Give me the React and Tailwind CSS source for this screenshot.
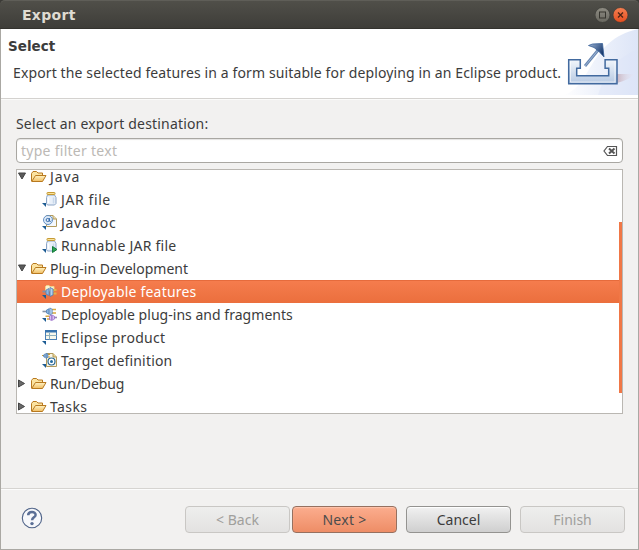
import React from "react";

const UI = "font-['Noto_Sans','Open_Sans',sans-serif]";

function Folder() {
  return (
    <svg width="16" height="16" viewBox="0 0 16 16" className="shrink-0">
      <defs>
        <linearGradient id="fold" x1="0" y1="0" x2="0" y2="1">
          <stop offset="0" stopColor="#fff3c4" />
          <stop offset="1" stopColor="#f0bd62" />
        </linearGradient>
      </defs>
      <path d="M0.5 12V4.500L2 2.500h3.500l1.500 1.500h4.500V6.500" fill="#fbe3a0" stroke="#b8791f" />
      <path d="M0.700 12.500L4.500 6.500h10.500L11.500 12.500z" fill="url(#fold)" stroke="#b8791f" strokeLinejoin="round" />
    </svg>
  );
}

function Corner() {
  return <path d="M0 11h4v4z" fill="#1d5c93" />;
}

function Jar({ run }) {
  return (
    <svg width="16" height="16" viewBox="0 0 16 16" className="shrink-0">
      <path d="M5.500 3h7l1.500 2.500v6l-1.500 1.500h-7l-1-1.500v-6z" fill="#e9f0f9" stroke="#8ba5c6" />
      <path d="M6.500 5.500v5.500" stroke="#fff" strokeWidth="1.500" />
      <path d="M11.500 5.500v6" stroke="#c9d9eb" strokeWidth="1.500" />
      <rect x="5" y="0.500" width="8" height="2" rx="0.500" fill="#fbe39a" stroke="#c59a35" />
      <Corner />
      {run && <path d="M10.500 8.500l4.500 3-4.500 3z" fill="#2ba153" stroke="#147c3a" />}
    </svg>
  );
}

function Javadoc() {
  return (
    <svg width="16" height="16" viewBox="0 0 16 16" className="shrink-0">
      <path d="M4.500 0.500h6.500l3.500 3.500v7.500h-10z" fill="#f4f8fd" stroke="#b29a5d" />
      <path d="M11 0.500v3.500h3.500" fill="#eadcae" stroke="#b29a5d" />
      <circle cx="6" cy="5" r="4.500" fill="#dfebf8" stroke="#5586be" strokeWidth="0.900" />
      <circle cx="5.700" cy="5" r="1.600" fill="none" stroke="#2b62a5" strokeWidth="0.900" />
      <path d="M7.400 3v3.200q1 .9 1.900-.6" fill="none" stroke="#2b62a5" strokeWidth="0.900" />
      <Corner />
    </svg>
  );
}

function Feature() {
  return (
    <svg width="16" height="16" viewBox="0 0 16 16" className="shrink-0">
      <path d="M3.500 7V2.500L4.500 1.500h2.500l1 1h4V7z" fill="#fff4cf" stroke="#f2d48d" />
      <path d="M0.500 7.500h4" stroke="#7f90a8" strokeWidth="1.800" />
      <path d="M11 6h3.500M11 9.500h3.500" stroke="#e3b44a" strokeWidth="1.800" />
      <path d="M4 6l3-1.500v7L4 10z" fill="#8fb6e1" stroke="#5580b4" strokeWidth="0.800" />
      <path d="M8 3.500l3 1.500v6l-3 1.500z" fill="#b4d0ee" stroke="#4a78af" strokeWidth="0.800" />
      <Corner />
    </svg>
  );
}

function Plugins() {
  return (
    <svg width="16" height="16" viewBox="0 0 16 16" className="shrink-0">
      <path d="M0.500 4.500h4" stroke="#8794a8" strokeWidth="1.600" />
      <path d="M10 2.500h4M10 6h4" stroke="#d9a93e" strokeWidth="1.500" />
      <path d="M4.500 3l2.500-1.200v5.400l-2.500-1.200z" fill="#8db3de" stroke="#4378b0" strokeWidth="0.700" />
      <path d="M7.800 1l2.400 1.200v4.600l-2.400 1.200z" fill="#bdd6f0" stroke="#4378b0" strokeWidth="0.700" />
      <path d="M3.500 9.300h4M5 12h3" stroke="#d9a93e" strokeWidth="1.400" />
      <path d="M12 10.500h3" stroke="#9b87b6" strokeWidth="1.600" />
      <path d="M7.500 9l2-1v5.500l-2-1zM10.200 8l2.300 1.300v2.800l-2.300 1.200z" fill="#dac3f4" stroke="#9364c6" strokeWidth="0.700" />
      <Corner />
    </svg>
  );
}

function Product() {
  return (
    <svg width="16" height="16" viewBox="0 0 16 16" className="shrink-0">
      <rect x="3.500" y="0.500" width="11" height="9" fill="#f8f8ec" stroke="#4a7fb5" />
      <rect x="3" y="0" width="12" height="2.500" fill="#3974ae" />
      <path d="M7.500 3v6.500M4 5.500h10.500" stroke="#8eb0bd" />
      <Corner />
    </svg>
  );
}

function Target() {
  return (
    <svg width="16" height="16" viewBox="0 0 16 16" className="shrink-0">
      <path d="M4.500 0.500h6.500l3.500 3.500v9.500h-10z" fill="#fbf6e4" stroke="#b29a5d" />
      <path d="M11 0.500v3.500h3.500" fill="#ecd592" stroke="#b29a5d" />
      <path d="M0 2.500h2M5.500 1.500h2.500M5.500 4h2.500" stroke="#d3a034" strokeWidth="1.200" />
      <path d="M1.500 2l1.800-1.200v4L1.500 3.600zM4 0l2 1.200v3L4 5.400z" fill="#82a9d5" stroke="#4378b0" strokeWidth="0.600" />
      <circle cx="9.500" cy="8.500" r="3.500" fill="#fff" stroke="#286693" strokeWidth="1.200" />
      <circle cx="9.500" cy="8.500" r="1.500" fill="#246ba0" />
      <Corner />
    </svg>
  );
}

const rows = [
  { t: "Java", open: true, c: "tracking-[0.9px]" },
  { t: "JAR file", icon: <Jar />, c: "tracking-[0.6px]" },
  { t: "Javadoc", icon: <Javadoc />, c: "tracking-[0.7px]" },
  { t: "Runnable JAR file", icon: <Jar run />, c: "tracking-[0.24px]" },
  { t: "Plug-in Development", open: true, c: "tracking-[0px]" },
  { t: "Deployable features", icon: <Feature />, selected: true, c: "tracking-[0.2px]" },
  { t: "Deployable plug-ins and fragments", icon: <Plugins />, c: "tracking-[0.03px]" },
  { t: "Eclipse product", icon: <Product />, c: "tracking-[0.27px]" },
  { t: "Target definition", icon: <Target />, c: "tracking-[0.18px]" },
  { t: "Run/Debug", open: false, c: "tracking-[-0.1px]" },
  { t: "Tasks", open: false, c: "tracking-[0.4px]" },
];

function Row({ row }) {
  const parent = row.icon === undefined;
  return (
    <div className={"flex h-[23px] shrink-0 items-center " + (row.selected ? "border-t border-[#e66b3c] bg-linear-to-b from-[#f57c4d] to-[#eb6f3d] text-white" : "")}>
      {parent ? (
        <>
          <svg width="14" height="16" viewBox="0 0 14 16" className="shrink-0">
            {row.open ? (
              <path d="M1.500 4h7L5 10z" fill="#5a5a5a" stroke="#444" />
            ) : (
              <path d="M1.500 4v7L7.500 7.500z" fill="#6a6a6a" stroke="#444" />
            )}
          </svg>
          <Folder />
          <span className={"ml-[3px] whitespace-nowrap " + row.c}>{row.t}</span>
        </>
      ) : (
        <>
          <div className="ml-[25px] flex">{row.icon}</div>
          <span className={"ml-[3px] whitespace-nowrap " + row.c}>{row.t}</span>
        </>
      )}
    </div>
  );
}

function Button({ children, kind, className = "" }) {
  const look = {
    disabled: "border-[#c9c7c4] bg-linear-to-b from-[#eeeeed] to-[#e3e2e1] text-[#a09f9c]",
    primary: "border-[#96705f] bg-linear-to-b from-[#fbad8e] to-[#ee8d66] text-[#4c4c4c] shadow-[inset_0_1px_1px_#ffc5ad]",
    normal: "border-[#949390] bg-linear-to-b from-[#f1f1f1] to-[#cfcfcf] text-[#3c3c3c] shadow-[inset_0_1px_1px_#fff]",
  }[kind];
  return (
    <button className={"flex h-[27px] w-[105px] items-center justify-center rounded-[4px] border " + look + " " + className}>
      {children}
    </button>
  );
}

export default function App() {
  return (
    <div className={"flex h-[550px] w-[639px] flex-col overflow-hidden bg-[#3c3b37] text-[14px] leading-[20px] text-[#3c3c3c] " + UI}>
      <div className="flex h-[29px] shrink-0 items-center rounded-t-[5px] border-t border-b border-t-[#5f5e58] border-b-[#33322e] bg-linear-to-b from-[#504f49] to-[#3e3d39] pl-[22px] pr-[10px]">
        <span className="flex-1 font-[family-name:DejaVu_Sans,sans-serif] text-[14px] font-bold tracking-[0.3px] text-[#dfdbd2]">Export</span>
        <svg width="34" height="17" viewBox="0 0 34 17">
          <defs>
            <linearGradient id="max" x1="0" y1="0" x2="0" y2="1">
              <stop offset="0" stopColor="#8e8c83" />
              <stop offset="1" stopColor="#68675f" />
            </linearGradient>
            <linearGradient id="close" x1="0" y1="0" x2="0" y2="1">
              <stop offset="0" stopColor="#f48052" />
              <stop offset="1" stopColor="#e44d1f" />
            </linearGradient>
          </defs>
          <circle cx="7.500" cy="9" r="7.500" fill="url(#max)" stroke="#3a3935" strokeWidth="0.700" />
          <rect x="4.500" y="6" width="6" height="6" fill="none" stroke="#36352f" />
          <circle cx="25.500" cy="9" r="7.500" fill="url(#close)" stroke="#3a3935" strokeWidth="0.700" />
          <path d="M23 6.500l5 5M28 6.500l-5 5" stroke="#4c2415" strokeWidth="1.300" />
        </svg>
      </div>

      <div className="flex min-h-0 flex-1 flex-col border-x border-b border-[#aaa8a3] bg-[#f2f1f0]">
        <div className="flex h-[69px] shrink-0 overflow-hidden bg-white">
          <div className="w-[562px] shrink-0">
            <div className="ml-[7px] mt-[7px] font-[family-name:DejaVu_Sans,sans-serif] text-[13.500px] font-bold">Select</div>
            <div className="ml-[12px] mt-[7px] whitespace-nowrap tracking-[0.12px]">Export the selected features in a form suitable for deploying in an Eclipse product.</div>
          </div>
          <svg width="75" height="66" viewBox="563 29 75 66" className="shrink-0">
            <defs>
              <linearGradient id="sky" x1="0" y1="0" x2="1" y2="0">
                <stop offset="0" stopColor="#ffffff" />
                <stop offset="0.450" stopColor="#eef2fb" />
                <stop offset="1" stopColor="#dde5f7" />
              </linearGradient>
              <linearGradient id="tray" x1="0" y1="0" x2="0" y2="1">
                <stop offset="0" stopColor="#f2f6fb" />
                <stop offset="1" stopColor="#b5c8e2" />
              </linearGradient>
              <linearGradient id="shadow" x1="0" y1="0" x2="1" y2="0">
                <stop offset="0" stopColor="#c9b6c2" />
                <stop offset="1" stopColor="#e8e4f0" stopOpacity="0" />
              </linearGradient>
              <linearGradient id="tip" x1="0" y1="0" x2="1" y2="0.600">
                <stop offset="0" stopColor="#9db5d6" />
                <stop offset="1" stopColor="#17386d" />
              </linearGradient>
            </defs>
            <path d="M563 95C592 88 588 40 638 29V95z" fill="url(#sky)" />
            <path d="M598 95C606 70 620 55 638 50V95z" fill="#dbe4f7" opacity="0.400" />
            <path d="M617 83v-9h18q-6 6-18 9z" fill="url(#shadow)" />
            <path d="M568.700 59.700h11.600v8.600h-3.600v7.400h32v-7.400h-3.600v-8.600H617v24.100h-48.300z" fill="url(#tray)" stroke="#426a9f" strokeWidth="1.500" />
            <path d="M570.500 61.500v20.500h44.500v-20.500" fill="none" stroke="#fff" strokeOpacity="0.600" />
            <path d="M585 66l14-17" stroke="#6887b2" strokeWidth="2.800" />
            <path d="M585 66l14-17" stroke="#9db4d3" strokeWidth="1" />
            <path d="M588.500 45.500l4-1.500 10-.5 1.500 13.500-5-5.500-5-4z" fill="url(#tip)" stroke="#365e95" strokeWidth="0.800" />
          </svg>
        </div>
        <div className="h-[2px] shrink-0 border-t border-[#d4d2cf] bg-[#fbfbfa]" />

        <div className="flex flex-1 flex-col px-[15px] pt-[14px]">
          <div className="whitespace-nowrap tracking-[0.18px]">Select an export destination:</div>
          <div className="mt-[4px] flex h-[25px] w-[607px] shrink-0 items-center rounded-[4px] border border-[#a9a7a2] bg-white pl-[4px] pr-[4px] shadow-[inset_0_1px_1px_#e4e3e1]">
            <span className="flex-1 tracking-[0.27px] text-[#bcb9b5]">type filter text</span>
            <svg width="15" height="12" viewBox="0 0 15 12">
              <path d="M4.500 1.500h9v9h-9L1 6z" fill="#fff" stroke="#555" strokeWidth="1.200" />
              <path d="M6 3.500l5.500 5M11.500 3.500l-5.500 5" stroke="#555" strokeWidth="2" />
            </svg>
          </div>

          <div className="mt-[6px] flex h-[245px] w-[607px] shrink-0 border border-[#bab7b2] bg-white">
            <div className="h-[243px] flex-1 overflow-hidden">
              <div className="-mt-[5px] flex flex-col">
                {rows.map((row) => (
                  <Row key={row.t} row={row} />
                ))}
              </div>
            </div>
            <div className="-ml-[3px] mt-[52px] h-[171px] w-[3px] bg-[#f07746]" />
          </div>
        </div>

        <div className="flex h-[61px] shrink-0 items-start border-t border-[#d6d4d1] pl-[20px] pr-[13px] pt-[17px] shadow-[inset_0_1px_0_#fcfcfc]">
          <svg width="22" height="22" viewBox="0 0 22 22" className="mt-px">
            <circle cx="11" cy="11" r="9.700" fill="#f7f8fb" stroke="#4f6388" strokeWidth="1.100" />
            <path d="M7.200 8.300C7.200 3.900 14.800 4 14.600 8c-.1 2.400-3.500 2.400-3.500 5.200" fill="none" stroke="#5b6f96" strokeWidth="2.500" />
            <circle cx="11" cy="16.600" r="1.700" fill="#5b6f96" />
          </svg>
          <div className="ml-auto flex">
            <Button kind="disabled">&lt; Back</Button>
            <Button kind="primary" className="ml-[2px] tracking-[0.3px]">Next &gt;</Button>
            <Button kind="normal" className="ml-[9px]">Cancel</Button>
            <Button kind="disabled" className="ml-[9px]">Finish</Button>
          </div>
        </div>
      </div>
    </div>
  );
}
